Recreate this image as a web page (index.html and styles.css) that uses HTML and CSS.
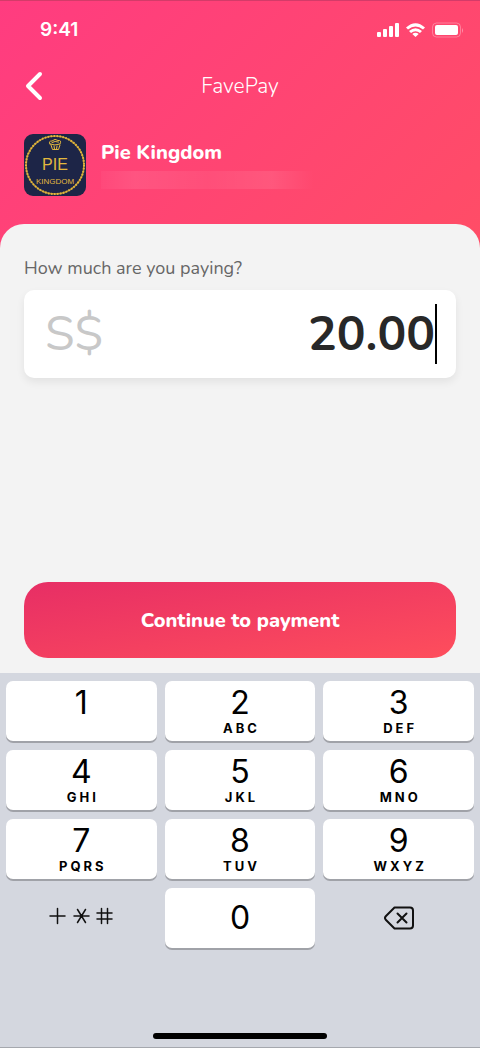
FILE: index.html
```html
<!DOCTYPE html>
<html lang="en">
<head>
    <meta charset="UTF-8">
    <meta name="viewport" content="width=device-width, initial-scale=1.0">
    <title>FavePay</title>
    <link rel="stylesheet" href="styles.css">
</head>
<body>

<header class="header">
    <div class="status-bar">
        <span class="time">9:41</span>
        <svg class="status-icons" width="88" height="16" viewBox="0 0 88 16" fill="#fff">
            <rect x="1" y="10" width="4" height="5" rx="1"/>
            <rect x="7" y="7" width="4" height="8" rx="1"/>
            <rect x="13" y="4" width="4" height="11" rx="1"/>
            <rect x="19" y="1" width="4" height="14" rx="1"/>
            <path d="M30 5.600Q39.500 -3 49 5.600L47 7.500Q39.500 1.500 32 7.500Z"/>
            <path d="M33 9Q39.500 3.500 46 9L44 11Q39.500 7.300 35 11Z"/>
            <path d="M36.300 12Q39.500 9.600 42.700 12L39.500 15Z"/>
            <rect x="56.500" y="1" width="28" height="14" rx="4" fill="none" stroke="#fff" stroke-opacity=".3"/>
            <rect x="59" y="3" width="23" height="10" rx="2"/>
            <path d="M86 6q2 2.500 0 5z" opacity=".4"/>
        </svg>
    </div>
    <nav class="nav">
        <button class="back" type="button" aria-label="Back">
            <svg width="20" height="30" viewBox="0 0 20 30" fill="none" stroke="#fff" stroke-width="4" stroke-linecap="round" stroke-linejoin="round">
                <path d="M16 3L4 15L16 27"/>
            </svg>
        </button>
        <h1>FavePay</h1>
    </nav>
    <div class="merchant">
        <svg class="logo" width="62" height="62" viewBox="0 0 62 62">
            <rect width="62" height="62" rx="9" fill="#1d2547"/>
            <circle cx="31" cy="31" r="29" fill="none" stroke="#b99335" stroke-width="1.500"/>
            <circle cx="31" cy="31" r="29" fill="none" stroke="#e3b83e" stroke-width="2" stroke-dasharray="1.500 1.500"/>
            <g fill="none" stroke="#e3b83e" stroke-linejoin="round" stroke-linecap="round">
                <path d="M26 10Q24 7 28 7Q31 4 34 6.500Q38 6 36 10Q31 12 26 10ZM28 8.500Q31 6.500 34.500 8"/>
                <path d="M27 11L28.500 15.500H34.500L36 11M30 12L30.500 15M33 12L32.500 15"/>
            </g>
            <text class="logo-name" x="31" y="36">PIE</text>
            <text class="logo-sub" x="31" y="50">KINGDOM</text>
        </svg>
        <div class="merchant-info">
            <h2>Pie Kingdom</h2>
            <div class="address"></div>
        </div>
    </div>
</header>

<main class="sheet">
    <label for="amount">How much are you paying?</label>
    <div class="amount-box">
        <span class="currency">S$</span>
        <input type="text" id="amount" name="amount" inputmode="decimal" value="20.00">
        <span class="caret"></span>
    </div>
    <button class="continue" type="button">Continue to payment</button>
</main>

<section class="keyboard">
    <div class="keys">
        <button type="button">1</button>
        <button type="button">2<small>ABC</small></button>
        <button type="button">3<small>DEF</small></button>
        <button type="button">4<small>GHI</small></button>
        <button type="button">5<small>JKL</small></button>
        <button type="button">6<small>MNO</small></button>
        <button type="button">7<small>PQRS</small></button>
        <button type="button">8<small>TUV</small></button>
        <button type="button">9<small>WXYZ</small></button>
        <button class="plain" type="button" aria-label="Symbols">
            <svg width="64" height="22" viewBox="0 0 64 22" fill="none" stroke="#111" stroke-width="1.500" stroke-linecap="round">
                <path d="M1 9H16M8.500 1.500V16.500"/>
                <path d="M25 9H40M28.500 2.500L36.500 15.500M36.500 2.500L28.500 15.500"/>
                <path d="M48 6H63M48 12H63M52.500 1.500V16.500M58.500 1.500V16.500"/>
            </svg>
        </button>
        <button class="zero" type="button">0</button>
        <button class="plain" type="button" aria-label="Delete">
            <svg width="30" height="24" viewBox="0 0 30 24" fill="none" stroke="#111" stroke-width="2" stroke-linecap="round" stroke-linejoin="round">
                <path d="M10.500 1.500H26Q29 1.500 29 4.500V19.500Q29 22.500 26 22.500H10.500L2 14Q0 12 2 10Z"/>
                <path d="M13.500 7.500L22.500 16.500M22.500 7.500L13.500 16.500"/>
            </svg>
        </button>
    </div>
    <div class="home-bar"></div>
</section>

</body>
</html>
```

FILE: styles.css
```css
* {
    box-sizing: border-box;
}
body {
    display: flex;
    flex-direction: column;
    min-height: 100vh;
    margin: 0;
    font-family: Nunito, Lato, sans-serif;
    background-color: #f3f3f3;
}
button {
    padding: 0;
    border: none;
    background: none;
    font-family: inherit;
    cursor: pointer;
}
h1, h2 {
    margin: 0;
}
svg {
    display: block;
}
.header {
    padding: 0 24px 52px;
    border-top: 1px solid #d43b69;
    background: linear-gradient(135deg, #ff3c80, #ff4d66);
}
.status-bar {
    display: flex;
    justify-content: space-between;
    align-items: center;
    height: 57px;
    margin: 0 -8px 0 16px;
}
.time {
    color: #fff;
    font: 600 19px Inter, sans-serif;
}
.nav {
    display: grid;
    grid-template-columns: 40px 1fr 40px;
    align-items: center;
    height: 56px;
    color: #fff;
}
.nav h1 {
    font-size: 21px;
    font-weight: 300;
    text-align: center;
}
.merchant {
    display: flex;
    gap: 15px;
    margin-top: 20px;
}
.merchant-info {
    flex: 1;
}
.merchant h2 {
    padding-top: 6px;
    color: #fff;
    font-size: 20px;
    line-height: 26px;
    font-weight: 800;
}
.address {
    width: 60%;
    height: 18px;
    margin-top: 5px;
    background: linear-gradient(90deg, rgba(255, 255, 255, 0.03), rgba(255, 255, 255, 0.09) 16%, rgba(255, 255, 255, 0.05) 50%, rgba(255, 255, 255, 0.09) 80%, rgba(255, 255, 255, 0));
}
.logo text {
    fill: #e3b83e;
    font-family: "Liberation Sans Narrow", "Liberation Sans", sans-serif;
    text-anchor: middle;
}
.logo .logo-name {
    font-size: 16px;
}
.logo .logo-sub {
    font-size: 8px;
}
.sheet {
    display: flex;
    flex: 1;
    flex-direction: column;
    margin-top: -24px;
    padding: 32px 24px 15px;
    border-radius: 24px 24px 0 0;
    background-color: #f3f3f3;
}
.sheet label {
    color: #666;
    font-size: 18px;
    line-height: 24px;
}
.amount-box {
    display: flex;
    align-items: center;
    height: 88px;
    margin: 10px 0 24px;
    padding: 0 19px 0 21px;
    border-radius: 10px;
    background-color: #fff;
    box-shadow: 0 4px 8px rgba(0, 0, 0, 0.07);
}
.currency {
    color: #c8c8c8;
    font-size: 48px;
    font-weight: 400;
}
.amount-box input {
    flex: 1;
    min-width: 0;
    padding: 0;
    border: none;
    outline: none;
    background: none;
    color: #282828;
    font-family: inherit;
    font-size: 48px;
    font-weight: 700;
    text-align: right;
}
.caret {
    width: 2px;
    height: 60px;
    background-color: #000;
}
.continue {
    height: 76px;
    margin-top: auto;
    border-radius: 24px;
    background: linear-gradient(170deg, #e72e65, #fe4e5c);
    color: #fff;
    font-size: 20px;
    font-weight: 800;
}
.keyboard {
    padding: 8px 6px 7px;
    background-color: #d4d7df;
    border-bottom: 1px solid #a5a8ae;
}
.keys {
    display: grid;
    grid-template-columns: repeat(3, 1fr);
    grid-auto-rows: 60px;
    gap: 9px 8px;
}
.keys button {
    display: flex;
    flex-direction: column;
    align-items: center;
    padding-top: 5px;
    border-radius: 7px;
    background-color: #fff;
    box-shadow: 0 2px 0 #a0a2a8;
    color: #000;
    font: 400 32px/34px Inter, sans-serif;
}
.keys small {
    padding-left: 3px;
    font-size: 13px;
    line-height: 16px;
    font-weight: 700;
    letter-spacing: 3px;
}
.keys .plain, .keys .zero {
    justify-content: center;
    padding: 0;
}
.keys .plain {
    background: none;
    box-shadow: none;
}
.home-bar {
    width: 174px;
    height: 6px;
    margin: 85px auto 1px;
    border-radius: 3px;
    background-color: #000;
}
```
